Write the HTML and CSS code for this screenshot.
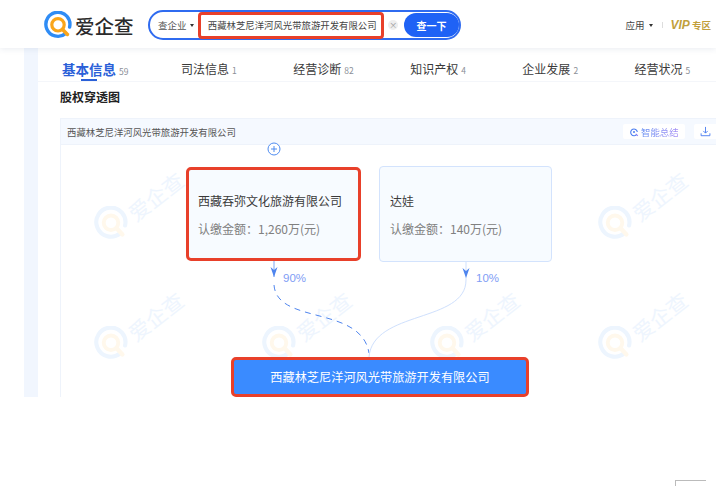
FILE: index.html
```html
<!DOCTYPE html>
<html>
  <head>
    <meta charset="utf-8">
    <link rel="stylesheet" href="styles.css">
  </head>
  <body>
    <div class="page">
      <header class="top-bar">
        <div class="logo">
          <svg class="logo-mark" viewBox="0 0 28 28" width="28" height="28">
            <path d="M21.5 22.6A12 12 0 1 1 25.6 16" fill="none" stroke="#2f8cf5" stroke-width="3.4" stroke-linecap="round"/>
            <circle cx="14" cy="13.8" r="6.2" fill="none" stroke="#f9a51a" stroke-width="3.2"/>
            <path d="M18.6 18.4L23.4 23.4" stroke="#f9a51a" stroke-width="3.6" stroke-linecap="round"/>
          </svg>
          <span class="logo-text">爱企查</span>
        </div>
        <div class="search">
          <span class="search-type">查企业<i class="caret"></i></span>
          <div class="search-input">西藏林芝尼洋河风光带旅游开发有限公司</div>
          <span class="search-clear">×</span>
          <button class="search-button">查一下</button>
        </div>
        <nav class="top-links">
          <span class="apps">应用<i class="caret"></i></span>
          <span class="divider"></span>
          <span class="vip"><b>VIP</b> 专区</span>
        </nav>
      </header>

      <div class="body-row">
        <div class="side-band"></div>
        <main class="content">
          <div class="tabs">
            <div class="tab active">基本信息<small>59</small></div>
            <div class="tab">司法信息<small>1</small></div>
            <div class="tab">经营诊断<small>82</small></div>
            <div class="tab">知识产权<small>4</small></div>
            <div class="tab">企业发展<small>2</small></div>
            <div class="tab">经营状况<small>5</small></div>
          </div>
          <h2 class="section-title">股权穿透图</h2>
          <section class="chart-card">
            <div class="chart-head">
              <span class="chart-name">西藏林芝尼洋河风光带旅游开发有限公司</span>
              <div class="chart-tools">
                <button class="tool-button summary">
                  <svg viewBox="0 0 12 12" width="10" height="10">
                    <path d="M9.4 8.6A4 4 0 1 1 10 6" fill="none" stroke="#4a7df0" stroke-width="1.3"/>
                    <path d="M8 8.2L10.6 10.6" stroke="#8a7df5" stroke-width="1.3"/>
                    <circle cx="6" cy="6" r="1.2" fill="#4a7df0"/>
                  </svg>
                  <span class="summary-label">智能总结</span>
                </button>
                <button class="tool-button download">
                  <svg viewBox="0 0 12 12" width="11" height="11">
                    <path d="M6 1V7.6M3.6 5.4L6 7.8L8.4 5.4M1.2 8V10.6H10.8V8" fill="none" stroke="#4a7df0" stroke-width="1"/>
                  </svg>
                </button>
              </div>
            </div>
            <div class="chart-canvas">
              <div class="watermarks">
                <div class="wm"><svg viewBox="0 0 28 28" width="34" height="34"><use href="#wm-mark"/></svg><span>爱企查</span></div>
                <div class="wm"><svg viewBox="0 0 28 28" width="34" height="34"><use href="#wm-mark"/></svg><span>爱企查</span></div>
                <div class="wm"><svg viewBox="0 0 28 28" width="34" height="34"><use href="#wm-mark"/></svg><span>爱企查</span></div>
                <div class="wm"><svg viewBox="0 0 28 28" width="34" height="34"><use href="#wm-mark"/></svg><span>爱企查</span></div>
                <div class="wm"><svg viewBox="0 0 28 28" width="34" height="34"><use href="#wm-mark"/></svg><span>爱企查</span></div>
                <div class="wm"><svg viewBox="0 0 28 28" width="34" height="34"><use href="#wm-mark"/></svg><span>爱企查</span></div>
                <div class="wm"><svg viewBox="0 0 28 28" width="34" height="34"><use href="#wm-mark"/></svg><span>爱企查</span></div>
                <div class="wm"><svg viewBox="0 0 28 28" width="34" height="34"><use href="#wm-mark"/></svg><span>爱企查</span></div>
              </div>

              <svg class="links" viewBox="0 0 656 252" width="656" height="252">
                <defs>
                  <g id="wm-mark">
                    <path d="M21.5 22.6A12 12 0 1 1 25.6 16" fill="none" stroke="#edf5fe" stroke-width="3.4" stroke-linecap="round"/>
                    <circle cx="14" cy="13.8" r="6" fill="none" stroke="#fff8ec" stroke-width="3.2"/>
                    <path d="M18.6 18.4L23.4 23.4" stroke="#fff8ec" stroke-width="3.6" stroke-linecap="round"/>
                  </g>
                </defs>
                <circle cx="213" cy="4" r="6" fill="#fff" stroke="#4f8cf0" stroke-width="1"/>
                <path d="M210 4H216M213 1V7" stroke="#4f8cf0" stroke-width="1"/>
                <path d="M213 115V132" stroke="#7aa5f5" stroke-width="1"/>
                <path d="M213 140C216 180 300 160 308 208" fill="none" stroke="#4f85ee" stroke-width="1" stroke-dasharray="6 5"/>
                <path d="M405 117V135C405 178 312 165 308 212" fill="none" stroke="#cfe0fd" stroke-width="1"/>
                <path d="M209.500 122L213 125L216.500 122L213 132Z" fill="#4f85ee"/>
                <path d="M401.500 123L405 126L408.500 123L405 133Z" fill="#4f85ee"/>
              </svg>

              <div class="node holder marked first">
                <div class="node-name">西藏吞弥文化旅游有限公司</div>
                <div class="node-amount">认缴金额：1,260万(元)</div>
              </div>
              <div class="node holder second">
                <div class="node-name">达娃</div>
                <div class="node-amount">认缴金额：140万(元)</div>
              </div>
              <span class="pct pct-left">90%</span>
              <span class="pct pct-right">10%</span>
              <div class="node target marked">西藏林芝尼洋河风光带旅游开发有限公司</div>
            </div>
          </section>
        </main>
      </div>
    </div>
    <div class="corner-mark"></div>
  </body>
</html>
```

FILE: styles.css
```css
* {
  box-sizing: border-box;
}

html,
body {
  height: 100%;
}

body {
  margin: 0;
  background: #fff;
  color: #333;
  font-family: "Noto Sans CJK SC", "Liberation Sans", sans-serif;
  overflow: hidden;
}

.page {
  width: 716px;
  height: 397px;
  overflow: hidden;
}

/* Header */
.top-bar {
  position: relative;
  z-index: 2;
  display: flex;
  align-items: center;
  height: 48px;
  padding: 2px 5px 0 44px;
  background: #fff;
  box-shadow: 0 1px 6px rgba(40, 70, 120, 0.1);
}

.logo {
  display: flex;
  align-items: center;
  gap: 3px;
  width: 104px;
}

.logo-text {
  font-size: 19.5px;
  font-weight: 500;
  color: #2b2b2b;
  white-space: nowrap;
}

.search {
  display: flex;
  align-items: center;
  width: 313px;
  height: 30px;
  padding-left: 8px;
  border: 2px solid #2f6bf0;
  border-radius: 15px;
}

.search-type {
  display: flex;
  align-items: center;
  width: 40px;
  font-size: 9.5px;
  color: #555;
}

.caret {
  width: 0;
  height: 0;
  margin-left: 3px;
  border: 2.5px solid transparent;
  border-top: 3px solid #333;
  border-bottom: 0;
}

.search-input {
  width: 187px;
  height: 27px;
  padding-left: 7px;
  border: 3px solid #e8402a;
  border-radius: 4px;
  font-size: 9.4px;
  line-height: 21px;
  color: #444;
  white-space: nowrap;
}

.search-clear {
  width: 10px;
  height: 10px;
  margin: 0 6px 0 4px;
  border-radius: 50%;
  background: #eee;
  font-size: 8px;
  line-height: 10px;
  text-align: center;
  color: #999;
}

.search-button {
  width: 55px;
  height: 24px;
  padding: 0;
  border: none;
  border-radius: 12px;
  background: #1f62f5;
  color: #fff;
  font-family: inherit;
  font-size: 10px;
  font-weight: 700;
}

.top-links {
  display: flex;
  align-items: center;
  margin-left: auto;
  font-size: 9.5px;
  color: #444;
}

.apps {
  display: flex;
  align-items: center;
  margin-left: -1px;
}

.apps .caret {
  margin-left: 5px;
}

.divider {
  width: 1px;
  height: 6px;
  margin: 0 7px 0 9px;
  background: #ddd;
}

.vip {
  font-size: 9.5px;
  font-weight: 700;
  color: #c19f3c;
}

.vip b {
  font-family: "Liberation Sans", sans-serif;
  font-size: 12px;
  font-style: italic;
}

/* Main area */
.body-row {
  display: flex;
  height: 349px;
  padding-left: 24px;
}

.side-band {
  width: 14px;
  background: #f1f6fe;
}

.content {
  flex: 1;
  min-width: 0;
  padding-left: 22px;
}

.tabs {
  display: flex;
  gap: 56.5px;
  height: 34px;
  margin-left: -22px;
  padding: 9px 0 0 24px;
  border-bottom: 1px solid #f4f6fa;
}

.tab {
  position: relative;
  font-size: 12px;
  line-height: 24px;
  color: #3a3a3a;
  white-space: nowrap;
}

.tab small {
  margin-left: 3px;
  font-size: 8.5px;
  color: #8b8f97;
}

.tab.active {
  margin-right: -4px;
  font-size: 13.5px;
  font-weight: 700;
  color: #2a60d8;
}

.tab.active small {
  font-weight: 400;
}

.tab.active::after {
  content: "";
  position: absolute;
  left: 19px;
  bottom: 0;
  width: 16px;
  height: 2px;
  background: #2a60d8;
}

.section-title {
  margin: 6px 0 13px;
  font-size: 12px;
  line-height: 17px;
  font-weight: 700;
  color: #222;
}

.chart-card {
  border-left: 1px solid #eef3fb;
}

.chart-head {
  display: flex;
  align-items: center;
  justify-content: space-between;
  height: 27px;
  padding-left: 6px;
  border-top: 1px solid #eef3fb;
  border-bottom: 1px solid #eef3fb;
  background: #f5f9ff;
}

.chart-name {
  font-size: 9.4px;
  color: #555;
  white-space: nowrap;
}

.chart-tools {
  display: flex;
  gap: 9px;
  margin-right: -14px;
}

.tool-button {
  display: flex;
  align-items: center;
  gap: 2px;
  height: 15px;
  padding: 0 0 0 6px;
  border: none;
  border-radius: 2px;
  background: #fff;
  font-family: inherit;
  font-size: 9.4px;
}

.tool-button.summary {
  width: 62px;
}

.summary-label {
  background: linear-gradient(90deg, #5f8af2, #a58cf5);
  -webkit-background-clip: text;
  background-clip: text;
  color: transparent;
}

.tool-button.download {
  width: 36px;
}

/* Diagram: nodes sit on a free canvas */
.chart-canvas {
  position: relative;
  height: 252px;
}

.watermarks {
  position: absolute;
  top: 18px;
  left: 0;
  display: grid;
  grid-template-columns: repeat(4, 168px);
  grid-auto-rows: 120px;
}

.wm {
  display: flex;
  align-items: center;
  padding-left: 33px;
}

.wm span {
  display: block;
  margin: -54px 0 0 -4px;
  font-size: 21px;
  font-weight: 400;
  color: #eef5fe;
  white-space: nowrap;
  transform: rotate(-38deg);
}

.links {
  position: absolute;
  top: 0;
  left: 0;
  overflow: visible;
}

.node {
  position: absolute;
}

.holder {
  padding-top: 23px;
  border: 1px solid #d3e3fd;
  border-radius: 4px;
  background: #f7fbff;
}

.holder.first {
  top: 22px;
  left: 125px;
  width: 175px;
  height: 94px;
  padding-left: 10px;
}

.holder.second {
  top: 21px;
  left: 318px;
  width: 173px;
  height: 96px;
  padding-left: 10px;
}

.node-name {
  font-size: 12px;
  line-height: 22px;
  color: #3a3a3a;
  white-space: nowrap;
}

.node-amount {
  margin-top: 6px;
  font-size: 12px;
  line-height: 22px;
  color: #808080;
  white-space: nowrap;
}

.target {
  top: 212px;
  left: 170px;
  width: 298px;
  height: 40px;
  background: #3a8bff;
  color: #fff;
  font-size: 12.2px;
  line-height: 35px;
  text-align: center;
  white-space: nowrap;
}

.marked {
  border: 3px solid #e8402a;
  border-radius: 5px;
}

.holder.marked {
  padding-top: 20px;
  padding-left: 9px;
}

.pct {
  position: absolute;
  top: 125px;
  font-family: "Liberation Sans", sans-serif;
  font-size: 11.5px;
  line-height: 16px;
  color: #7f9df5;
}

.pct-left {
  left: 222px;
}

.pct-right {
  left: 415px;
}

.corner-mark {
  position: fixed;
  top: 480px;
  left: 675px;
  width: 31px;
  height: 8px;
  border-top: 1px solid #bbb;
  border-left: 1px solid #bbb;
}
```
